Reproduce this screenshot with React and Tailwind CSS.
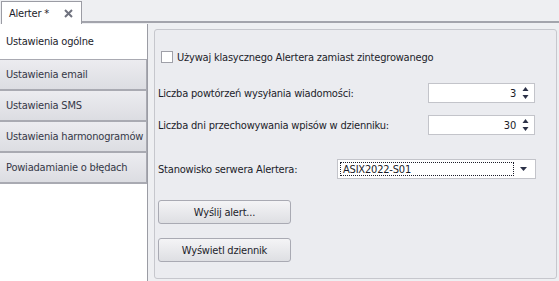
import React from "react";

const font = { fontFamily: "'DejaVu Sans Condensed', 'DejaVu Sans', sans-serif" };

function Spinner() {
  return (
    <svg width="7" height="14" viewBox="0 0 7 14" className="shrink-0">
      <path d="M3.5 1 L6.5 5 L0.5 5 Z" fill="#2b3047" />
      <path d="M0.5 9 L6.5 9 L3.5 13 Z" fill="#2b3047" />
    </svg>
  );
}

function NumInput({ value }) {
  return (
    <div className="w-[107px] h-[20px] border border-[#c3c4ca] bg-white flex items-center justify-end pr-[5px] gap-[6px]">
      <span className="text-[#1c1d2a]">{value}</span>
      <Spinner />
    </div>
  );
}

function NavItem({ children }) {
  return (
    <div className="h-[31px] border border-l-0 border-[#a9aab2] bg-gradient-to-b from-[#ececf0] to-[#dcdde2] flex items-center pl-[6px] text-[#353847] whitespace-nowrap">
      {children}
    </div>
  );
}

function Button({ children }) {
  return (
    <div className="w-[133px] h-[24px] rounded-[3px] border border-[#a9aab3] bg-gradient-to-b from-[#f4f4f6] to-[#dedfe3] flex items-center justify-center text-[#1c1d2a]">
      {children}
    </div>
  );
}

export default function App() {
  return (
    <div className="w-[559px] h-[281px] bg-[#eeeff2] flex flex-col text-[11px] leading-none tracking-[-0.2px] overflow-hidden whitespace-nowrap" style={font}>
      <div className="h-[24px] flex shrink-0">
        <div className="w-[81px] h-[24px] mt-[1px] ml-[1px] bg-white border border-b-0 border-[#9b9ca4] flex items-center pl-[7px] text-[#1c1d2a]">
          <span>Alerter *</span>
          <svg width="9" height="9" viewBox="0 0 9 9" className="ml-[15px]">
            <path d="M1 1 L8 8 M8 1 L1 8" stroke="#6f727e" strokeWidth="2" />
          </svg>
        </div>
        <div className="flex-1 flex flex-col">
          <div className="h-[21px]" />
          <div className="h-[2px] bg-[#a3a4ac]" />
        </div>
      </div>
      <div className="flex flex-1 min-h-0">
        <div className="w-[148px] bg-white border-r border-[#9b9ca4] flex flex-col">
          <div className="h-[35px] flex items-center pl-[6px] text-[#1c1d2a]">Ustawienia ogólne</div>
          <NavItem>Ustawienia email</NavItem>
          <NavItem>Ustawienia SMS</NavItem>
          <NavItem>Ustawienia harmonogramów</NavItem>
          <NavItem>Powiadamianie o błędach</NavItem>
          <div className="flex-1 border-t border-[#a9aab2]" />
        </div>
        <div className="flex-1 ml-[6px] mt-[5px] mr-[2px] mb-[2px] rounded-[3px] border border-[#c6c7cd] bg-[#ebecf0] pl-[3px] text-[#1c1d2a]">
          <div className="mt-[21px] flex items-center pl-[3px]">
            <div className="w-[12px] h-[12px] border border-[#9fa0a8] bg-white" />
            <span className="ml-[4px]">Używaj klasycznego Alertera zamiast zintegrowanego</span>
          </div>
          <div className="mt-[20px] flex items-center">
            <span className="flex-1">Liczba powtórzeń wysyłania wiadomości:</span>
            <div className="mr-[21px]"><NumInput value="3" /></div>
          </div>
          <div className="mt-[12px] flex items-center">
            <span className="flex-1">Liczba dni przechowywania wpisów w dzienniku:</span>
            <div className="mr-[21px]"><NumInput value="30" /></div>
          </div>
          <div className="mt-[24px] flex items-center">
            <span className="flex-1">Stanowisko serwera Alertera:</span>
            <div className="mr-[20px] w-[199px] h-[20px] border border-[#c3c4ca] bg-white flex items-center p-[2px]">
              <div className="flex-1 h-full border border-dotted border-[#1c1d2a] flex items-center pl-[2px] text-[#1c1d2a]">ASIX2022-S01</div>
              <svg width="7" height="4" viewBox="0 0 7 4" className="mx-[6px]">
                <path d="M0 0 L7 0 L3.5 4 Z" fill="#2b3047" />
              </svg>
            </div>
          </div>
          <div className="mt-[21px]"><Button>Wyślij alert...</Button></div>
          <div className="mt-[14px]"><Button>Wyświetl dziennik</Button></div>
        </div>
      </div>
    </div>
  );
}
